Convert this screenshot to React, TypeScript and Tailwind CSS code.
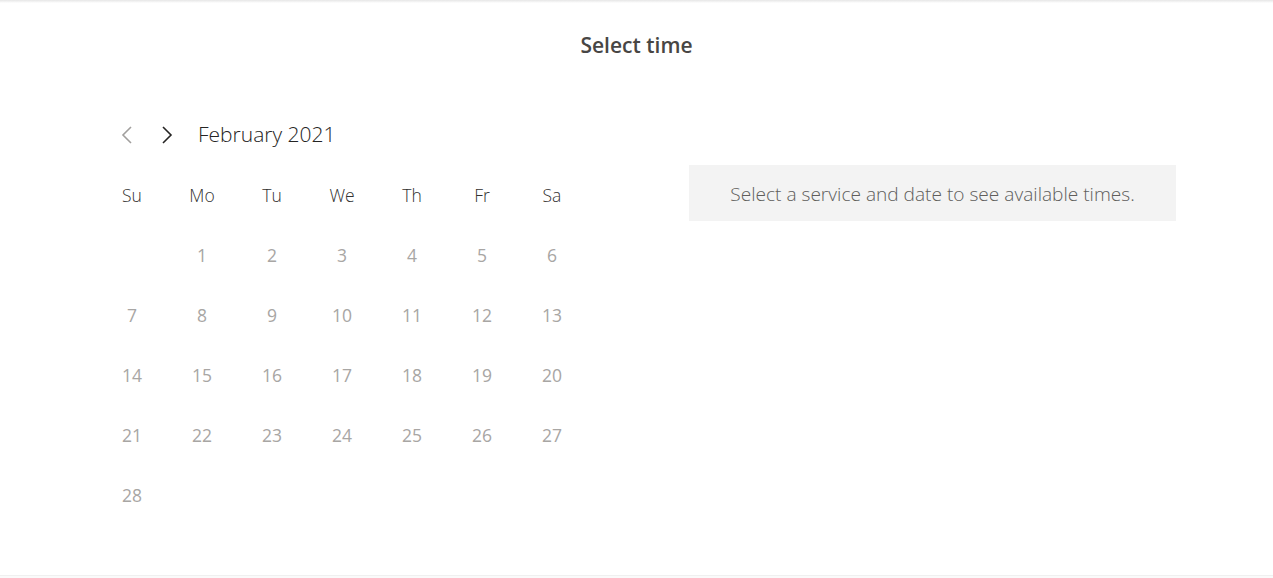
import React from "react";

const days = ["Su", "Mo", "Tu", "We", "Th", "Fr", "Sa"];
const cells: (number | null)[] = [null, ...Array.from({ length: 28 }, (_, i) => i + 1)];

export default function App() {
  return (
    <div
      className="w-[1273px] h-[578px] bg-white relative overflow-hidden flex flex-col"
      style={{ fontFamily: '"Segoe UI", "Open Sans", "Noto Sans", sans-serif' }}
    >
      <div className="h-[3px] bg-gradient-to-b from-[#e6e6e6] to-white shrink-0" />
      <h1 className="text-center text-[21px] font-semibold text-[#484644] mt-[27px] leading-[30px]">
        Select time
      </h1>
      <div className="flex px-[97px] mt-[60px] gap-[102px] flex-1">
        <div className="w-[490px]">
          <div className="flex items-center h-[30px] pl-[20px]">
            <button className="w-[20px] h-[20px] flex items-center justify-center text-[#a19f9d]">
              <svg width="14" height="20" viewBox="0 0 14 20" fill="none">
                <path d="M11 2 L3 10 L11 18" stroke="currentColor" strokeWidth="1.6" />
              </svg>
            </button>
            <button className="w-[20px] h-[20px] ml-[20px] flex items-center justify-center text-[#252423]">
              <svg width="14" height="20" viewBox="0 0 14 20" fill="none">
                <path d="M3 2 L11 10 L3 18" stroke="currentColor" strokeWidth="1.6" />
              </svg>
            </button>
            <span className="ml-[21px] text-[21px] font-light text-[#252423]">February 2021</span>
          </div>
          <div className="grid grid-cols-7 mt-[15px]">
            {days.map((d) => (
              <div key={d} className="h-[60px] flex items-center justify-center text-[17.5px] font-light text-[#323130]">
                {d}
              </div>
            ))}
            {cells.map((c, i) => (
              <div key={i} className="h-[60px] flex items-center justify-center text-[17.5px] text-[#a8a6a4]">
                {c ?? ""}
              </div>
            ))}
          </div>
        </div>
        <div className="w-[487px] mt-[45px]">
          <div className="h-[56px] pt-[3px] bg-[#f3f3f3] flex items-center justify-center text-[19.1px] font-light text-[#605e5c]">
            Select a service and date to see available times.
          </div>
        </div>
      </div>
      <div className="absolute left-0 right-0 bottom-0 h-[3px] bg-[#fafafa] border-t border-[#f0f0f0]" />
    </div>
  );
}
